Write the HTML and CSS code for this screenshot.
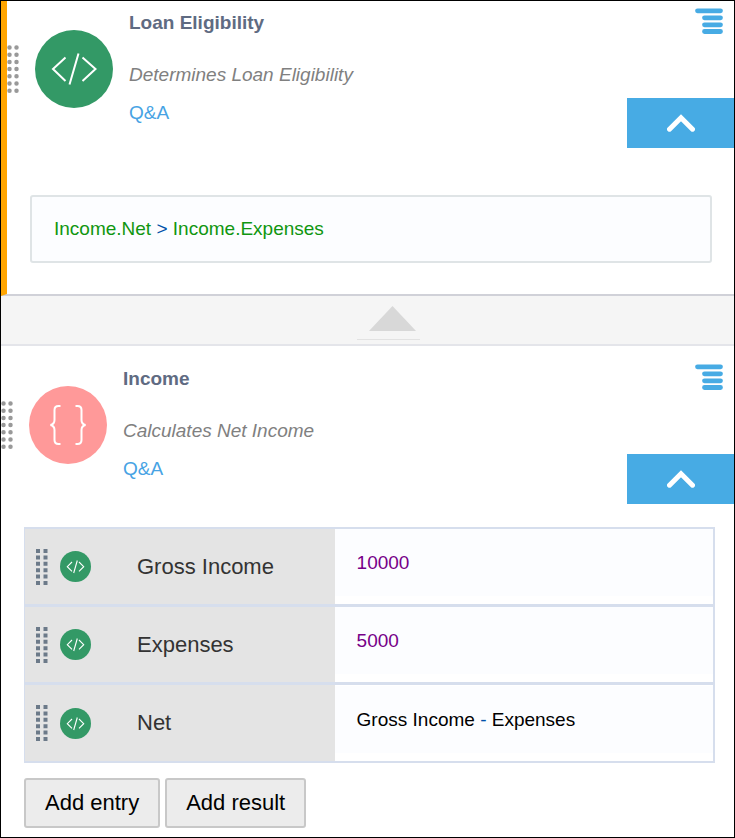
FILE: index.html
```html
<!DOCTYPE html>
<html lang="en">
<head>
    <meta charset="UTF-8">
    <meta name="viewport" content="width=device-width, initial-scale=1.0">
    <title>Loan Eligibility</title>
    <link rel="stylesheet" href="styles.css">
</head>
<body>
    <!-- shared icons -->
    <svg class="icon-defs" aria-hidden="true">
        <symbol id="icon-code" viewBox="0 0 78 78">
            <circle cx="39" cy="39" r="39" fill="#339966"/>
            <path d="M30.500 27.500 18 39l12.500 12M43.500 23.500 34.500 54.500M47.500 27.500 60.500 39l-13 12" fill="none" stroke="#fff" stroke-width="2"/>
        </symbol>
        <symbol id="icon-code-small" viewBox="0 0 31 31">
            <circle cx="15.500" cy="15.500" r="15.500" fill="#339966"/>
            <path d="M12 11 7.300 15.700 12 20.300M17.300 9.500 13.700 22M19 11l4.700 4.700L19 20.300" fill="none" stroke="#fff" stroke-width="1.100"/>
        </symbol>
        <symbol id="icon-braces" viewBox="0 0 78 78">
            <circle cx="39" cy="39" r="39" fill="#ff9999"/>
            <path d="M31.500 20h-2q-4 0-4 4v10q0 4-4 5q4 1 4 5v10q0 4 4 4h2M46.500 20h2q4 0 4 4v10q0 4 4 5q-4 1-4 5v10q0 4-4 4h-2" fill="none" stroke="#fff" stroke-width="2"/>
        </symbol>
        <symbol id="icon-drag" viewBox="0 0 12 48">
            <path d="M2.500 2.500v45M9.500 2.500v45" fill="none" stroke="#999" stroke-width="4.500" stroke-linecap="round" stroke-dasharray="0 7.200"/>
        </symbol>
        <symbol id="icon-drag-row" viewBox="0 0 12 36">
            <path d="M2 0v36M9.500 0v36" fill="none" stroke="#6c7a89" stroke-width="4" stroke-dasharray="4 2.400"/>
        </symbol>
        <symbol id="icon-menu" viewBox="0 0 28 26">
            <path d="M2.500 2.800h23M9.500 9.800h16M9.500 16.800h16M9.500 23.500h16" fill="none" stroke="#47abe4" stroke-width="4.800" stroke-linecap="round"/>
        </symbol>
        <symbol id="icon-up" viewBox="0 0 28 18">
            <path d="M2.500 15.200 14 3.700l11.500 11.500" fill="none" stroke="#fff" stroke-width="5" stroke-linecap="round"/>
        </symbol>
    </svg>

    <main class="container">
        <section class="decision decision-active">
            <div class="decision-header">
                <svg class="drag"><use href="#icon-drag"/></svg>
                <svg class="decision-icon"><use href="#icon-code"/></svg>
                <div class="decision-info">
                    <h2>Loan Eligibility</h2>
                    <p>Determines Loan Eligibility</p>
                    <a href="#">Q&amp;A</a>
                </div>
                <div class="decision-actions">
                    <button class="btn-menu" aria-label="Menu"><svg><use href="#icon-menu"/></svg></button>
                    <button class="btn-collapse" aria-label="Collapse"><svg><use href="#icon-up"/></svg></button>
                </div>
            </div>
            <div class="formula"><span class="variable">Income.Net</span> <span class="operator">&gt;</span> <span class="variable">Income.Expenses</span></div>
        </section>

        <div class="divider">
            <div class="arrow">
                <svg viewBox="0 0 47 25"><path d="M23.500 0 47 25H0z" fill="#d8d8d8"/></svg>
            </div>
        </div>

        <section class="decision decision-context">
            <div class="decision-header">
                <svg class="drag"><use href="#icon-drag"/></svg>
                <svg class="decision-icon"><use href="#icon-braces"/></svg>
                <div class="decision-info">
                    <h2>Income</h2>
                    <p>Calculates Net Income</p>
                    <a href="#">Q&amp;A</a>
                </div>
                <div class="decision-actions">
                    <button class="btn-menu" aria-label="Menu"><svg><use href="#icon-menu"/></svg></button>
                    <button class="btn-collapse" aria-label="Collapse"><svg><use href="#icon-up"/></svg></button>
                </div>
            </div>
            <table class="entries">
                <tr>
                    <th scope="row">
                        <div class="entry-name">
                            <svg class="drag-row"><use href="#icon-drag-row"/></svg>
                            <svg class="entry-icon"><use href="#icon-code-small"/></svg>
                            <span>Gross Income</span>
                        </div>
                    </th>
                    <td><div class="entry-value"><span class="number">10000</span></div></td>
                </tr>
                <tr>
                    <th scope="row">
                        <div class="entry-name">
                            <svg class="drag-row"><use href="#icon-drag-row"/></svg>
                            <svg class="entry-icon"><use href="#icon-code-small"/></svg>
                            <span>Expenses</span>
                        </div>
                    </th>
                    <td><div class="entry-value"><span class="number">5000</span></div></td>
                </tr>
                <tr>
                    <th scope="row">
                        <div class="entry-name">
                            <svg class="drag-row"><use href="#icon-drag-row"/></svg>
                            <svg class="entry-icon"><use href="#icon-code-small"/></svg>
                            <span>Net</span>
                        </div>
                    </th>
                    <td><div class="entry-value">Gross Income <span class="operator">-</span> Expenses</div></td>
                </tr>
            </table>
            <div class="buttons">
                <button class="btn">Add entry</button>
                <button class="btn">Add result</button>
            </div>
        </section>
    </main>
</body>
</html>
```
FILE: styles.css
```css
* {
    box-sizing: border-box;
}

body {
    margin: 0;
    font-family: "Liberation Sans", Arial, sans-serif;
    font-size: 19px;
    line-height: 22px;
    color: #000;
    background: #fff;
}

svg {
    display: block;
    flex-shrink: 0;
}

.icon-defs {
    display: none;
}

.container {
    min-height: 100vh;
    border: 1px solid #000;
}

.decision-active {
    border-left: 6px solid #ffa500;
    border-bottom: 2px solid #d0d1d8;
    padding-bottom: 31px;
}

.decision-context {
    padding: 11px 0 9px;
}

.decision-header {
    display: flex;
    align-items: flex-start;
}

.drag {
    width: 12px;
    height: 48px;
    margin-top: 44px;
}

.decision-icon {
    width: 78px;
    height: 78px;
    margin: 29px 16px 0;
}

.decision-info {
    flex-grow: 1;
    padding-top: 11px;
}

.decision-info h2 {
    margin: 0;
    font-size: 19px;
    color: #5f6b82;
}

.decision-info p {
    margin: 30px 0 16px;
    font-style: italic;
    color: #808080;
}

.decision-info a {
    color: #47a3e4;
    text-decoration: none;
}

.decision-actions {
    display: flex;
    flex-direction: column;
    align-items: flex-end;
    gap: 64px;
    padding-top: 7px;
}

.btn-menu,
.btn-collapse {
    border: none;
    padding: 0;
    cursor: pointer;
}

.btn-menu {
    background: none;
    margin-right: 11px;
}

.btn-menu svg {
    width: 28px;
    height: 26px;
}

.btn-collapse {
    display: flex;
    justify-content: center;
    align-items: center;
    width: 107px;
    height: 50px;
    background-color: #47abe4;
}

.btn-collapse svg {
    width: 28px;
    height: 18px;
}

.formula {
    margin: 47px 22px 0 23px;
    padding: 21px 22px;
    border: 2px solid #dfe4e6;
    border-radius: 3px;
    background-color: #fcfdff;
}

.variable {
    color: #109610;
}

.operator {
    color: #0050a8;
}

.number {
    color: #770088;
}

.divider {
    display: flex;
    justify-content: center;
    height: 50px;
    padding-left: 42px;
    border-bottom: 2px solid #e4e5ea;
    background-color: #f5f5f5;
}

.arrow {
    width: 63px;
    height: 44px;
    padding: 10px 4px 0 12px;
    border-bottom: 1px solid #e2e2e2;
}

.arrow svg {
    width: 47px;
    height: 25px;
}

.entries {
    width: calc(100% - 42px);
    margin: 23px 19px 0 23px;
    border-spacing: 0;
    border-left: 1px solid #d6deed;
    border-right: 2px solid #d6deed;
    border-bottom: 2px solid #d6deed;
}

.entries th,
.entries td {
    padding: 0;
    border-top: 2px solid #d6deed;
    border-bottom: 1px solid #d6deed;
}

.entries tr:last-child th,
.entries tr:last-child td {
    border-bottom: none;
}

.entries th {
    width: 45%;
    background-color: #e4e4e4;
    font-size: 22px;
    font-weight: normal;
    color: #333;
}

.entries td {
    height: 78px;
    padding-bottom: 8px;
}

.entry-name {
    display: flex;
    align-items: center;
    padding-left: 11px;
}

.drag-row {
    width: 12px;
    height: 36px;
}

.entry-icon {
    width: 31px;
    height: 31px;
    margin: 0 46px 0 12px;
}

.entry-value {
    height: 67px;
    padding: 23px 22px 22px;
    background-color: #fcfdff;
}

.buttons {
    display: flex;
    gap: 5px;
    margin: 15px 23px 0;
}

.btn {
    height: 50px;
    padding: 0 19px;
    border: 2px solid #c8c8c8;
    border-radius: 3px;
    background-color: #ececec;
    font-family: inherit;
    font-size: 22px;
    color: #000;
    cursor: pointer;
}
```
